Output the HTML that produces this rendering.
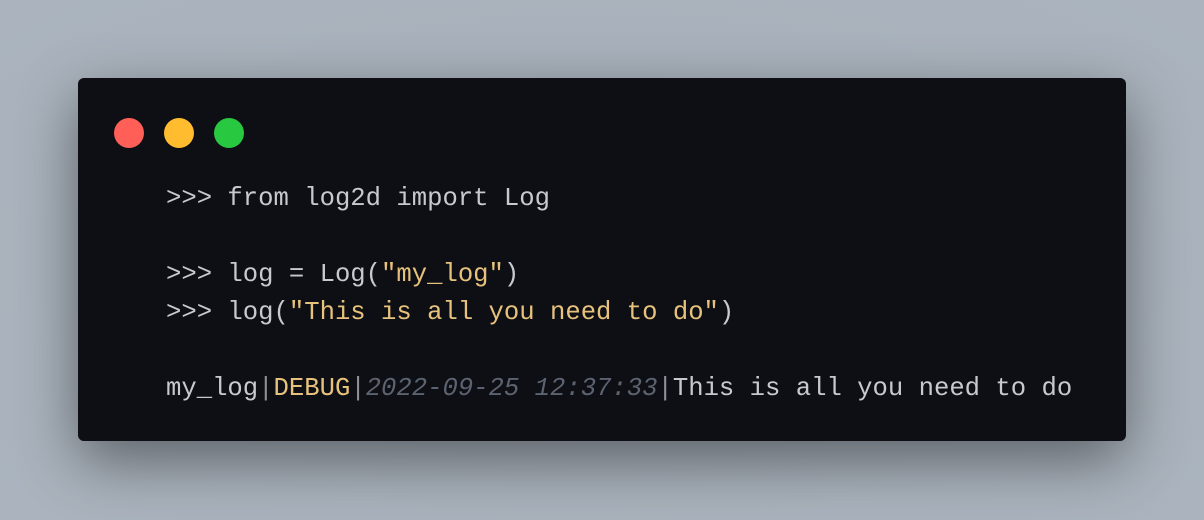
<!DOCTYPE html>
<html><head><meta charset="utf-8"><style>
html,body{margin:0;padding:0;width:1204px;height:520px;overflow:hidden;background:#a8b1bb;}
body{background:radial-gradient(ellipse at center,#a3acb6 0%,#a9b2bc 60%,#abb4be 100%);}
.win{position:absolute;left:78px;top:78px;width:1048px;height:363px;background:#0e0f14;border-radius:6px;box-shadow:0 20px 60px rgba(0,0,0,0.45);}
.dot{position:absolute;top:40px;width:30px;height:30px;border-radius:50%;}
pre{position:absolute;left:88px;top:102px;margin:0;font-family:"Liberation Mono",monospace;font-size:25.6px;line-height:38px;color:#c7c9cf;}
.s{color:#e7c27c}.d{color:#5c6370;font-style:italic}.p{color:#8a8f98}
</style></head><body>
<div class="win">
<div class="dot" style="left:36px;background:#ff5f57"></div>
<div class="dot" style="left:86px;background:#febc2e"></div>
<div class="dot" style="left:136px;background:#28c840"></div>
<pre>&gt;&gt;&gt; from log2d import Log

&gt;&gt;&gt; log = Log(<span class="s">"my_log"</span>)
&gt;&gt;&gt; log(<span class="s">"This is all you need to do"</span>)

my_log<span class="p">|</span><span class="s">DEBUG</span><span class="p">|</span><span class="d">2022-09-25 12:37:33</span><span class="p">|</span>This is all you need to do</pre>
</div>
</body></html>
